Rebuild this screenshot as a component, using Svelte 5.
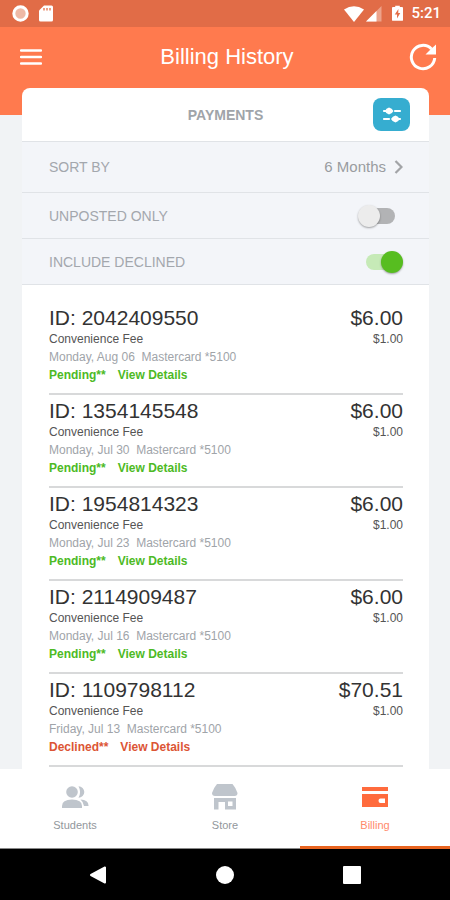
<script>
  const payments = [
    { id: '2042409550', date: 'Monday, Aug 06', amount: '$6.00', status: 'Pending' },
    { id: '1354145548', date: 'Monday, Jul 30', amount: '$6.00', status: 'Pending' },
    { id: '1954814323', date: 'Monday, Jul 23', amount: '$6.00', status: 'Pending' },
    { id: '2114909487', date: 'Monday, Jul 16', amount: '$6.00', status: 'Pending' },
    { id: '1109798112', date: 'Friday, Jul 13', amount: '$70.51', status: 'Declined' }
  ];

  let unpostedOnly = $state(false);
  let includeDeclined = $state(true);
</script>

<div class="screen">
  <div class="status-bar">
    <svg width="17" height="17" viewBox="0 0 17 17" aria-hidden="true">
      <circle cx="8.5" cy="8.5" r="6.7" fill="#eeb9a6" stroke="#fff" stroke-width="3" />
    </svg>
    <svg width="14" height="17" viewBox="0 0 14 17" aria-hidden="true">
      <path d="M5 0.5h7.5Q14 .5 14 2v13q0 1.500-1.500 1.500h-11Q0 16.500 0 15V5.500z" fill="#fff" />
      <path d="M5 3v2.500M8 3v2.500M11 3v2.500" stroke="#e36e49" stroke-width="1.300" />
    </svg>
    <div class="signals">
      <svg width="20" height="16" viewBox="0 0 20 16" aria-hidden="true">
        <path d="M0 3.500Q10-3 20 3.500L10 16z" fill="#fff" />
      </svg>
      <svg width="16" height="16" viewBox="0 0 16 16" aria-hidden="true">
        <path d="M15.500 0v15.500H0z" fill="#eda28a" />
        <path d="M10.500 5v10.500H0z" fill="#fff" />
      </svg>
    </div>
    <svg width="11" height="17" viewBox="0 0 12 17" aria-hidden="true">
      <path d="M3.500 0h5v1.500H11q1 0 1 1V15.500q0 1-1 1H1q-1 0-1-1V2.500q0-1 1-1h2.500z" fill="#fff" />
      <path d="M7 3.500L3 9.500h2.500V14L9 8H6.800z" fill="#e36e49" />
    </svg>
    <time>5:21</time>
  </div>

  <header>
    <button class="icon-button" aria-label="Menu">
      <svg width="22" height="16" viewBox="0 0 22 16" aria-hidden="true">
        <path d="M1 1.500h20M1 8h20M1 14.500h20" stroke="#fff" stroke-width="2.400" stroke-linecap="round" />
      </svg>
    </button>
    <h1>Billing History</h1>
    <button class="icon-button" aria-label="Refresh">
      <svg width="28" height="28" viewBox="0 0 28 28" fill="none" aria-hidden="true">
        <path d="M22.500 6A11.700 11.700 0 1 0 25.700 15" stroke="#fff" stroke-width="3" />
        <path d="M27 1.500v10H16.500l4.500-4.500z" fill="#fff" />
      </svg>
    </button>
  </header>

  <main>
    <div class="card-head">
      <h2>PAYMENTS</h2>
      <button class="filter" aria-label="Filters">
        <svg width="20" height="18" viewBox="0 0 20 18" aria-hidden="true">
          <path d="M2 5h7M13 5h5M2 13h5M11 13h7" stroke="#fff" stroke-width="2.200" stroke-linecap="round" />
          <path d="M7 1.500q3 .5 4.500 3.500q-1.500 3-4.500 3.500Q4 8 3 5q1-3 4-3.500zM13.500 9.500q3 .5 4 3.500q-1 3-4 3.500Q10.500 16 9 13q1.500-3 4.500-3.500z" fill="#fff" />
        </svg>
      </button>
    </div>

    <div class="option sort">
      <span>SORT BY</span>
      <button class="period">
        6 Months
        <svg width="9" height="14" viewBox="0 0 9 14" fill="none" aria-hidden="true">
          <path d="M1.500 1L7.500 7L1.500 13" stroke="#a2a4a7" stroke-width="2.200" />
        </svg>
      </button>
    </div>
    <div class="option">
      <label for="unposted">UNPOSTED ONLY</label>
      <input id="unposted" type="checkbox" role="switch" bind:checked={unpostedOnly} />
    </div>
    <div class="option">
      <label for="declined">INCLUDE DECLINED</label>
      <input id="declined" type="checkbox" role="switch" bind:checked={includeDeclined} />
    </div>

    <ul>
      {#each payments as payment (payment.id)}
        <li>
          <div class="line total"><span>ID: {payment.id}</span><span>{payment.amount}</span></div>
          <div class="line fee"><span>Convenience Fee</span><span>$1.00</span></div>
          <div class="line method">{`${payment.date}  Mastercard *5100`}</div>
          <div class="line state" class:declined={payment.status === 'Declined'}>
            <span>{payment.status}**</span>
            <a href="#{payment.id}">View Details</a>
          </div>
        </li>
      {/each}
    </ul>
  </main>

  <nav class="tabs" aria-label="Sections">
    <a href="#students">
      <svg width="28" height="26" viewBox="0 0 28 26" fill="#bfc5cc" aria-hidden="true">
        <circle cx="11" cy="8" r="5.800" />
        <path d="M17.500 2.200a5.800 5.800 0 1 1 0 11.600q3.200-5.800 0-11.600z" />
        <path d="M1 24v-2q0-6.500 10-6.500t10 6.500v2z" />
        <path d="M19.500 15.500q8 .5 8 6v.5H23q-.5-4-3.500-6.500z" />
      </svg>
      <span>Students</span>
    </a>
    <a href="#store">
      <svg width="28" height="26" viewBox="0 0 28 26" fill="#bfc5cc" aria-hidden="true">
        <path d="M6 0h15.500Q25 4 26.500 9q0 3-3 3H4Q1 12 1 9Q2.500 4 6 0z" />
        <path fill-rule="evenodd" d="M3 14h22v11.500H14V18h-6.500v7.500H3zM17 17.500v4.500h4.500v-4.500z" />
      </svg>
      <span>Store</span>
    </a>
    <a href="#billing" class="active" aria-current="page">
      <svg width="28" height="26" viewBox="0 0 28 26" aria-hidden="true">
        <path fill="#ff6b3d" fill-rule="evenodd" d="M1 3h26v4H1zM1 10h26v13H1zM19.500 14.500q-2 0-2 2.200t2 2.200H24v-4.400z" />
      </svg>
      <span>Billing</span>
    </a>
  </nav>

  <div class="system-nav">
    <button aria-label="Back">
      <svg width="18" height="20" viewBox="0 0 18 20" aria-hidden="true"><path d="M2 10L16 2.500v15z" fill="#fff" stroke="#fff" stroke-linejoin="round" stroke-width="2" /></svg>
    </button>
    <button aria-label="Home">
      <svg width="18" height="18" viewBox="0 0 18 18" aria-hidden="true"><circle cx="9" cy="9" r="9" fill="#fff" /></svg>
    </button>
    <button aria-label="Recent apps">
      <svg width="18" height="18" viewBox="0 0 18 18" aria-hidden="true"><rect width="18" height="18" rx="1" fill="#fff" /></svg>
    </button>
  </div>
</div>

<style>
  :global(body) {
    margin: 0;
  }

  .screen {
    display: flex;
    flex-direction: column;
    height: 100vh;
    background: linear-gradient(#ff7a4e 115px, #f1f3f5 115px);
    font-family: 'Liberation Sans', Arial, sans-serif;
    overflow: hidden;
  }

  button {
    padding: 0;
    border: 0;
    background: none;
    color: inherit;
    font: inherit;
    cursor: pointer;
  }

  svg {
    display: block;
    flex: none;
  }

  .status-bar {
    display: flex;
    flex: none;
    align-items: center;
    gap: 10px;
    box-sizing: border-box;
    height: 27px;
    padding: 0 9px 0 12px;
    background: #e16c47;
  }

  .signals {
    display: flex;
    gap: 2px;
    margin-left: auto;
  }

  time {
    margin-left: -2px;
    color: #fff;
    font: 500 15px/27px Roboto, sans-serif;
  }

  header {
    display: flex;
    flex: none;
    align-items: center;
    justify-content: space-between;
    box-sizing: border-box;
    height: 61px;
    padding: 0 13px 2px 17px;
  }

  .icon-button {
    display: flex;
    align-items: center;
    justify-content: center;
    width: 28px;
    height: 40px;
  }

  h1 {
    margin: 0;
    color: #fff;
    font-size: 22px;
    font-weight: 400;
    line-height: 28px;
  }

  main {
    display: flex;
    flex: 1;
    flex-direction: column;
    min-height: 0;
    margin: 0 21px 0 22px;
    overflow: hidden;
    border-radius: 8px 8px 0 0;
    background: #fff;
  }

  .card-head {
    display: grid;
    flex: none;
    grid-template-columns: 1fr auto 1fr;
    align-items: center;
    height: 53px;
    padding: 0 19px;
  }

  h2 {
    grid-column: 2;
    margin: 0;
    color: #a0a4a9;
    font-size: 14px;
    font-weight: 700;
    line-height: 20px;
  }

  .filter {
    display: flex;
    align-items: center;
    justify-content: center;
    justify-self: end;
    width: 37px;
    height: 33px;
    border-radius: 8px;
    background: #36add0;
  }

  .option {
    display: flex;
    flex: none;
    align-items: center;
    justify-content: space-between;
    box-sizing: border-box;
    height: 46px;
    padding: 0 26px 0 27px;
    border-top: 1px solid #e0e3e7;
    background: #f3f5f9;
    color: #a3a7ad;
    font-size: 14px;
    line-height: 20px;
  }

  .sort {
    height: 51px;
  }

  .period {
    display: flex;
    align-items: center;
    gap: 8px;
    color: #999ca0;
    font-size: 15px;
  }

  input {
    display: grid;
    align-items: center;
    width: 45px;
    height: 22px;
    margin: 0;
    appearance: none;
    cursor: pointer;
  }

  input::before,
  input::after {
    grid-area: 1 / 1;
    content: '';
  }

  input::before {
    height: 16px;
    margin: 0 8px;
    border-radius: 8px;
    background: #b2b3b5;
  }

  input::after {
    width: 22px;
    height: 22px;
    border-radius: 50%;
    background: #ececec;
    box-shadow: 0 1px 2px rgb(0 0 0 / 35%);
  }

  input:checked::before {
    background: #c6eab7;
  }

  input:checked::after {
    justify-self: end;
    background: #57bd20;
  }

  ul {
    margin: 0;
    padding: 17px 26px 0 27px;
    border-top: 1px solid #e0e3e7;
    list-style: none;
  }

  li {
    padding: 4px 0 9px;
    border-bottom: 2px solid #d8d9da;
  }

  .line {
    display: flex;
    justify-content: space-between;
    font-size: 12px;
    line-height: 18px;
    white-space: pre;
  }

  .total {
    color: #333;
    font-size: 21px;
    line-height: 24px;
  }

  .fee {
    color: #555;
  }

  .method {
    color: #a0a4a9;
  }

  .state {
    justify-content: flex-start;
    gap: 12px;
    color: #4dba25;
    font-weight: 700;
  }

  .state.declined {
    color: #dc5535;
  }

  .state a {
    color: inherit;
    text-decoration: none;
  }

  .tabs {
    display: flex;
    flex: none;
    height: 80px;
    background: #fff;
  }

  .tabs a {
    display: flex;
    flex: 1;
    flex-direction: column;
    align-items: center;
    gap: 8px;
    box-sizing: border-box;
    padding-top: 15px;
    border-bottom: 1px solid #888;
    color: #92979c;
    font-size: 11px;
    line-height: 14px;
    text-decoration: none;
  }

  .tabs .active {
    border-bottom: 3px solid #e8641f;
    color: #ff8a6b;
  }

  .system-nav {
    display: flex;
    flex: none;
    align-items: center;
    justify-content: space-between;
    height: 51px;
    padding: 0 89px;
    background: #000;
  }
</style>
